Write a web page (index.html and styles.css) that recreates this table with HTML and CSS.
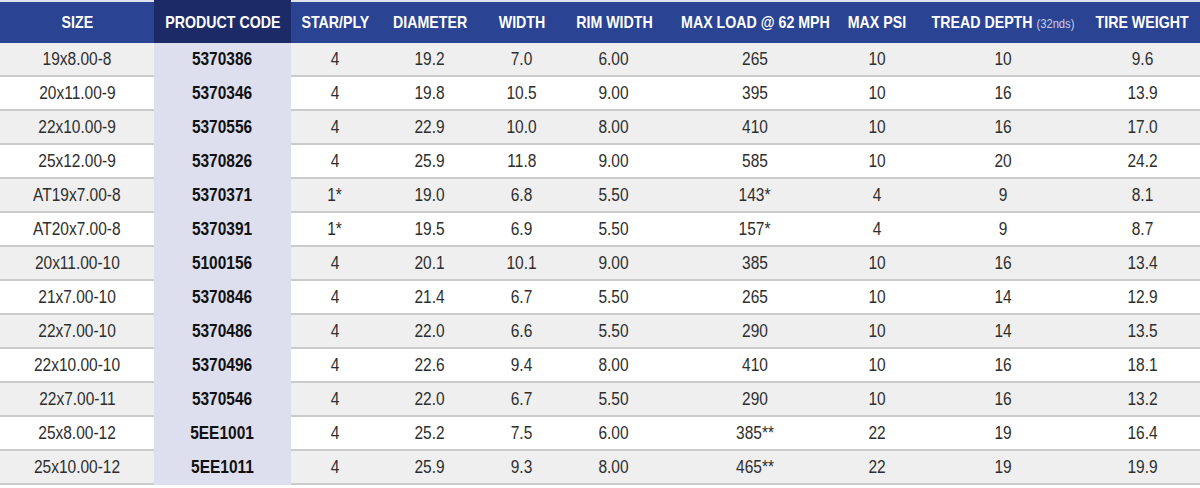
FILE: index.html
```html
<!DOCTYPE html>
<html>
<head>
<meta charset="utf-8">
<link rel="stylesheet" href="styles.css">
</head>
<body>
<table class="spec">
  <colgroup>
    <col class="c-size"><col class="c-code"><col class="c-star"><col class="c-dia"><col class="c-width"><col class="c-rim"><col class="c-load"><col class="c-psi"><col class="c-tread"><col class="c-weight">
  </colgroup>
  <thead>
    <tr>
      <th><span class="t">SIZE</span></th>
      <th class="code"><span class="t">PRODUCT CODE</span></th>
      <th><span class="t">STAR/PLY</span></th>
      <th><span class="t">DIAMETER</span></th>
      <th><span class="t">WIDTH</span></th>
      <th><span class="t">RIM WIDTH</span></th>
      <th><span class="t">MAX LOAD @ 62 MPH</span></th>
      <th><span class="t">MAX PSI</span></th>
      <th><span class="t">TREAD DEPTH <span class="unit">(32nds)</span></span></th>
      <th class="last"><span class="t">TIRE WEIGHT</span></th>
    </tr>
  </thead>
  <tbody>
    <tr><td><span class="t">19x8.00-8</span></td><td class="code"><span class="t">5370386</span></td><td><span class="t">4</span></td><td><span class="t">19.2</span></td><td><span class="t">7.0</span></td><td><span class="t">6.00</span></td><td><span class="t">265</span></td><td><span class="t">10</span></td><td><span class="t">10</span></td><td class="last"><span class="t">9.6</span></td></tr>
    <tr><td><span class="t">20x11.00-9</span></td><td class="code"><span class="t">5370346</span></td><td><span class="t">4</span></td><td><span class="t">19.8</span></td><td><span class="t">10.5</span></td><td><span class="t">9.00</span></td><td><span class="t">395</span></td><td><span class="t">10</span></td><td><span class="t">16</span></td><td class="last"><span class="t">13.9</span></td></tr>
    <tr><td><span class="t">22x10.00-9</span></td><td class="code"><span class="t">5370556</span></td><td><span class="t">4</span></td><td><span class="t">22.9</span></td><td><span class="t">10.0</span></td><td><span class="t">8.00</span></td><td><span class="t">410</span></td><td><span class="t">10</span></td><td><span class="t">16</span></td><td class="last"><span class="t">17.0</span></td></tr>
    <tr><td><span class="t">25x12.00-9</span></td><td class="code"><span class="t">5370826</span></td><td><span class="t">4</span></td><td><span class="t">25.9</span></td><td><span class="t">11.8</span></td><td><span class="t">9.00</span></td><td><span class="t">585</span></td><td><span class="t">10</span></td><td><span class="t">20</span></td><td class="last"><span class="t">24.2</span></td></tr>
    <tr><td><span class="t">AT19x7.00-8</span></td><td class="code"><span class="t">5370371</span></td><td><span class="t">1*</span></td><td><span class="t">19.0</span></td><td><span class="t">6.8</span></td><td><span class="t">5.50</span></td><td><span class="t">143*</span></td><td><span class="t">4</span></td><td><span class="t">9</span></td><td class="last"><span class="t">8.1</span></td></tr>
    <tr><td><span class="t">AT20x7.00-8</span></td><td class="code"><span class="t">5370391</span></td><td><span class="t">1*</span></td><td><span class="t">19.5</span></td><td><span class="t">6.9</span></td><td><span class="t">5.50</span></td><td><span class="t">157*</span></td><td><span class="t">4</span></td><td><span class="t">9</span></td><td class="last"><span class="t">8.7</span></td></tr>
    <tr><td><span class="t">20x11.00-10</span></td><td class="code"><span class="t">5100156</span></td><td><span class="t">4</span></td><td><span class="t">20.1</span></td><td><span class="t">10.1</span></td><td><span class="t">9.00</span></td><td><span class="t">385</span></td><td><span class="t">10</span></td><td><span class="t">16</span></td><td class="last"><span class="t">13.4</span></td></tr>
    <tr><td><span class="t">21x7.00-10</span></td><td class="code"><span class="t">5370846</span></td><td><span class="t">4</span></td><td><span class="t">21.4</span></td><td><span class="t">6.7</span></td><td><span class="t">5.50</span></td><td><span class="t">265</span></td><td><span class="t">10</span></td><td><span class="t">14</span></td><td class="last"><span class="t">12.9</span></td></tr>
    <tr><td><span class="t">22x7.00-10</span></td><td class="code"><span class="t">5370486</span></td><td><span class="t">4</span></td><td><span class="t">22.0</span></td><td><span class="t">6.6</span></td><td><span class="t">5.50</span></td><td><span class="t">290</span></td><td><span class="t">10</span></td><td><span class="t">14</span></td><td class="last"><span class="t">13.5</span></td></tr>
    <tr><td><span class="t">22x10.00-10</span></td><td class="code"><span class="t">5370496</span></td><td><span class="t">4</span></td><td><span class="t">22.6</span></td><td><span class="t">9.4</span></td><td><span class="t">8.00</span></td><td><span class="t">410</span></td><td><span class="t">10</span></td><td><span class="t">16</span></td><td class="last"><span class="t">18.1</span></td></tr>
    <tr><td><span class="t">22x7.00-11</span></td><td class="code"><span class="t">5370546</span></td><td><span class="t">4</span></td><td><span class="t">22.0</span></td><td><span class="t">6.7</span></td><td><span class="t">5.50</span></td><td><span class="t">290</span></td><td><span class="t">10</span></td><td><span class="t">16</span></td><td class="last"><span class="t">13.2</span></td></tr>
    <tr><td><span class="t">25x8.00-12</span></td><td class="code"><span class="t">5EE1001</span></td><td><span class="t">4</span></td><td><span class="t">25.2</span></td><td><span class="t">7.5</span></td><td><span class="t">6.00</span></td><td><span class="t">385**</span></td><td><span class="t">22</span></td><td><span class="t">19</span></td><td class="last"><span class="t">16.4</span></td></tr>
    <tr><td><span class="t">25x10.00-12</span></td><td class="code"><span class="t">5EE1011</span></td><td><span class="t">4</span></td><td><span class="t">25.9</span></td><td><span class="t">9.3</span></td><td><span class="t">8.00</span></td><td><span class="t">465**</span></td><td><span class="t">22</span></td><td><span class="t">19</span></td><td class="last"><span class="t">19.9</span></td></tr>
  </tbody>
</table>
</body>
</html>
```
FILE: styles.css
```css
html, body {
  margin: 0;
  padding: 0;
  background: #ffffff;
}

.spec {
  width: 1200px;
  border-collapse: collapse;
  table-layout: fixed;
  font-family: "Liberation Sans", Arial, sans-serif;
}

.c-size { width: 154px; }
.c-code { width: 137px; }
.c-star { width: 88px; }
.c-dia { width: 102px; }
.c-width { width: 82px; }
.c-rim { width: 102px; }
.c-load { width: 180px; }
.c-psi { width: 64px; }
.c-tread { width: 188px; }
.c-weight { width: 103px; }

.t {
  display: inline-block;
  margin: 0 -20px;
  transform: scaleX(0.86);
  transform-origin: center;
}

.spec th {
  height: 41px;
  padding: 0;
  background: #2a4493;
  border-top: 2px solid #dfe2ea;
  color: #ffffff;
  font-weight: bold;
  font-size: 16.5px;
  text-align: center;
  white-space: nowrap;
}

.spec th.code {
  background: #1c2b68;
  border-top-color: #1c2b68;
}

.spec th .unit {
  font-weight: normal;
  font-size: 13px;
  color: #c9d1ea;
}

.spec td {
  height: 32px;
  padding: 0;
  border-bottom: 2px solid #cbcbcb;
  text-align: center;
  color: #2e2e2e;
  font-size: 18px;
  white-space: nowrap;
}

.spec tbody tr:nth-child(odd) td {
  background: #efefef;
}

.spec tbody tr:nth-child(even) td {
  background: #ffffff;
}

.spec tbody tr td.code {
  background: #dedfee;
  border-bottom-color: #dedfee;
  font-weight: bold;
  color: #111111;
}

.spec td.last {
  padding-right: 12px;
}

.spec th.last {
  padding-right: 13px;
}
```
